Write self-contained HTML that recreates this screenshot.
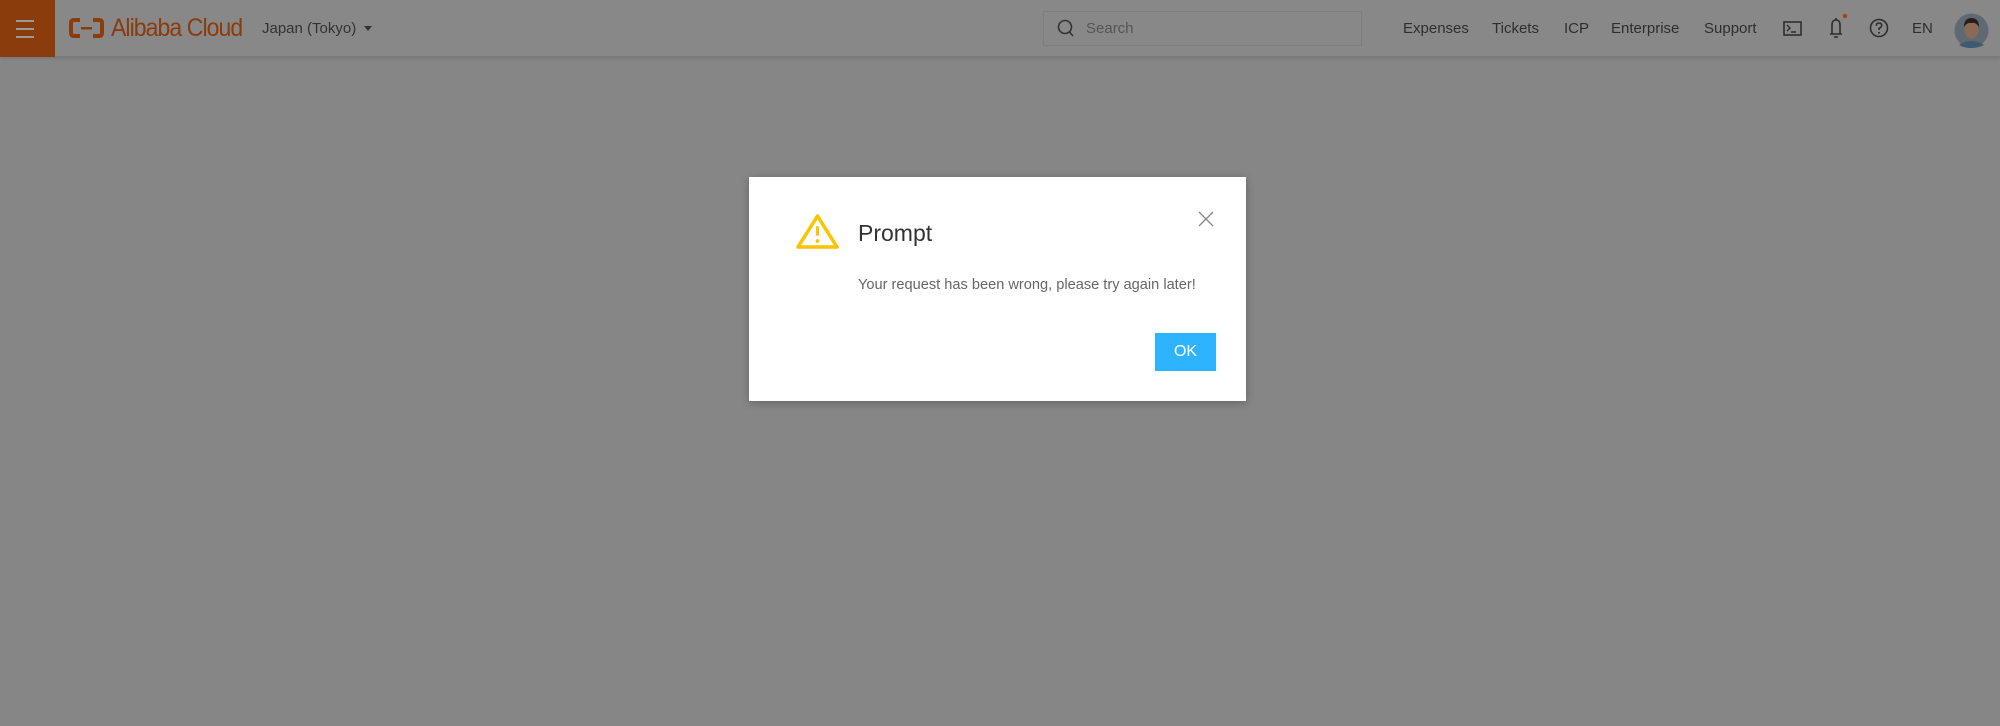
<!DOCTYPE html>
<html><head><meta charset="utf-8"><style>
*{margin:0;padding:0;box-sizing:border-box}
body{width:2000px;height:726px;background:#868686;font-family:"Liberation Sans",sans-serif;position:relative;overflow:hidden}
.hdr{position:absolute;left:0;top:0;width:2000px;height:57px;background:#888;border-bottom:1px solid #7a7a7a;box-shadow:0 1px 3px rgba(0,0,0,.15)}
.abs{position:absolute}
.nav{position:absolute;top:19px;font-size:15px;color:#2e2e2e;line-height:20px}
.dlg{position:absolute;left:749px;top:177px;width:497px;height:224px;background:#fff;box-shadow:0 2px 8px rgba(0,0,0,.25)}
</style></head><body>
<div class="hdr">
  <div class="abs" style="left:0;top:0;width:55px;height:57px;background:#8a3c0d"></div>
  <div class="abs" style="left:16px;top:20px;width:18px;height:2px;background:#9a9a9a"></div>
  <div class="abs" style="left:16px;top:28px;width:18px;height:2px;background:#9a9a9a"></div>
  <div class="abs" style="left:16px;top:36px;width:18px;height:2px;background:#9a9a9a"></div>
  <svg class="abs" style="left:69px;top:18px" width="35" height="20" viewBox="0 0 35 20"><path d="M11 2H5Q2 2 2 5V15Q2 18 5 18H11" fill="none" stroke="#8a3c0d" stroke-width="4"/><path d="M24 2H30Q33 2 33 5V15Q33 18 30 18H24" fill="none" stroke="#8a3c0d" stroke-width="4"/><rect x="12" y="9" width="11" height="2.5" fill="#8a3c0d"/></svg>
  <div class="abs" style="left:111px;top:14px;font-size:25px;color:#8a3c0d;letter-spacing:-1px;transform:scaleX(.92);transform-origin:left">Alibaba Cloud</div>
  <div class="nav" style="left:262px;color:#333">Japan (Tokyo)</div>
  <div class="abs" style="left:364px;top:26px;width:0;height:0;border-left:4px solid transparent;border-right:4px solid transparent;border-top:5px solid #333"></div>
  <div class="abs" style="left:1043px;top:11px;width:319px;height:35px;border:1px solid #7e7e7e"></div>
  <svg class="abs" style="left:1057px;top:19px" width="18" height="20" viewBox="0 0 18 20"><circle cx="8" cy="8" r="6.5" fill="none" stroke="#333" stroke-width="1.6"/><path d="M12.5 13L16 17" stroke="#333" stroke-width="1.6"/></svg>
  <div class="nav" style="left:1086px;color:#555">Search</div>
  <div class="nav" style="left:1403px">Expenses</div>
  <div class="nav" style="left:1492px">Tickets</div>
  <div class="nav" style="left:1564px">ICP</div>
  <div class="nav" style="left:1611px">Enterprise</div>
  <div class="nav" style="left:1704px">Support</div>
  <svg class="abs" style="left:1783px;top:21px" width="19" height="15" viewBox="0 0 19 15"><rect x="1" y="1" width="17" height="13" fill="none" stroke="#2e2e2e" stroke-width="1.6"/><path d="M4 4L7 7L4 10M8 11H13" fill="none" stroke="#2e2e2e" stroke-width="1.4"/></svg>
  <svg class="abs" style="left:1827px;top:13px" width="22" height="26" viewBox="0 0 22 26"><path d="M3 21H15M5 21V12Q5 7 9 7Q13 7 13 12V21M7 24H11M9 5V7" fill="none" stroke="#2e2e2e" stroke-width="1.6"/><circle cx="18" cy="3" r="2.2" fill="#a8410a"/></svg>
  <svg class="abs" style="left:1869px;top:18px" width="20" height="20" viewBox="0 0 20 20"><circle cx="10" cy="10" r="8.5" fill="none" stroke="#2e2e2e" stroke-width="1.6"/><path d="M7.3 7.7Q7.3 5 10 5Q12.7 5 12.7 7.5Q12.7 9 10 10.5V12" fill="none" stroke="#2e2e2e" stroke-width="1.6"/><circle cx="10" cy="14.8" r="1" fill="#2e2e2e"/></svg>
  <div class="nav" style="left:1912px">EN</div>
  <svg class="abs" style="left:1954px;top:13px" width="35" height="35" viewBox="0 0 35 35"><circle cx="17.5" cy="17.5" r="17" fill="#5e6a72"/><path d="M5 32Q17 24 30 32Q24 35 17 35Q10 35 5 32Z" fill="#3f5a70"/><ellipse cx="17.5" cy="17" rx="7" ry="8.5" fill="#8a6a55"/><path d="M10 14Q10 5 17.5 5Q25 5 25 14Q22 9 17.5 10Q13 9 10 14Z" fill="#2a1d18"/></svg>
</div>
<div class="dlg">
  <svg class="abs" style="left:46px;top:36px" width="45" height="37" viewBox="0 0 45 37"><path d="M22.5 3L42 34H3Z" fill="none" stroke="#fcc300" stroke-width="3.5" stroke-linejoin="round"/><rect x="21" y="13" width="3" height="10" rx="1.5" fill="#fcc300"/><circle cx="22.5" cy="28" r="1.9" fill="#fcc300"/></svg>
  <div class="abs" style="left:109px;top:43px;font-size:23px;color:#333">Prompt</div>
  <svg class="abs" style="left:449px;top:34px" width="16" height="16" viewBox="0 0 16 16"><path d="M1 1L15 15M15 1L1 15" stroke="#888" stroke-width="1.3"/></svg>
  <div class="abs" style="left:109px;top:100px;font-size:14.6px;color:#666">Your request has been wrong, please try again later!</div>
  <div class="abs" style="left:406px;top:156px;width:61px;height:38px;background:#2eb4ff;color:#fff;font-size:16px;line-height:38px;text-align:center">OK</div>
</div>
</body></html>
